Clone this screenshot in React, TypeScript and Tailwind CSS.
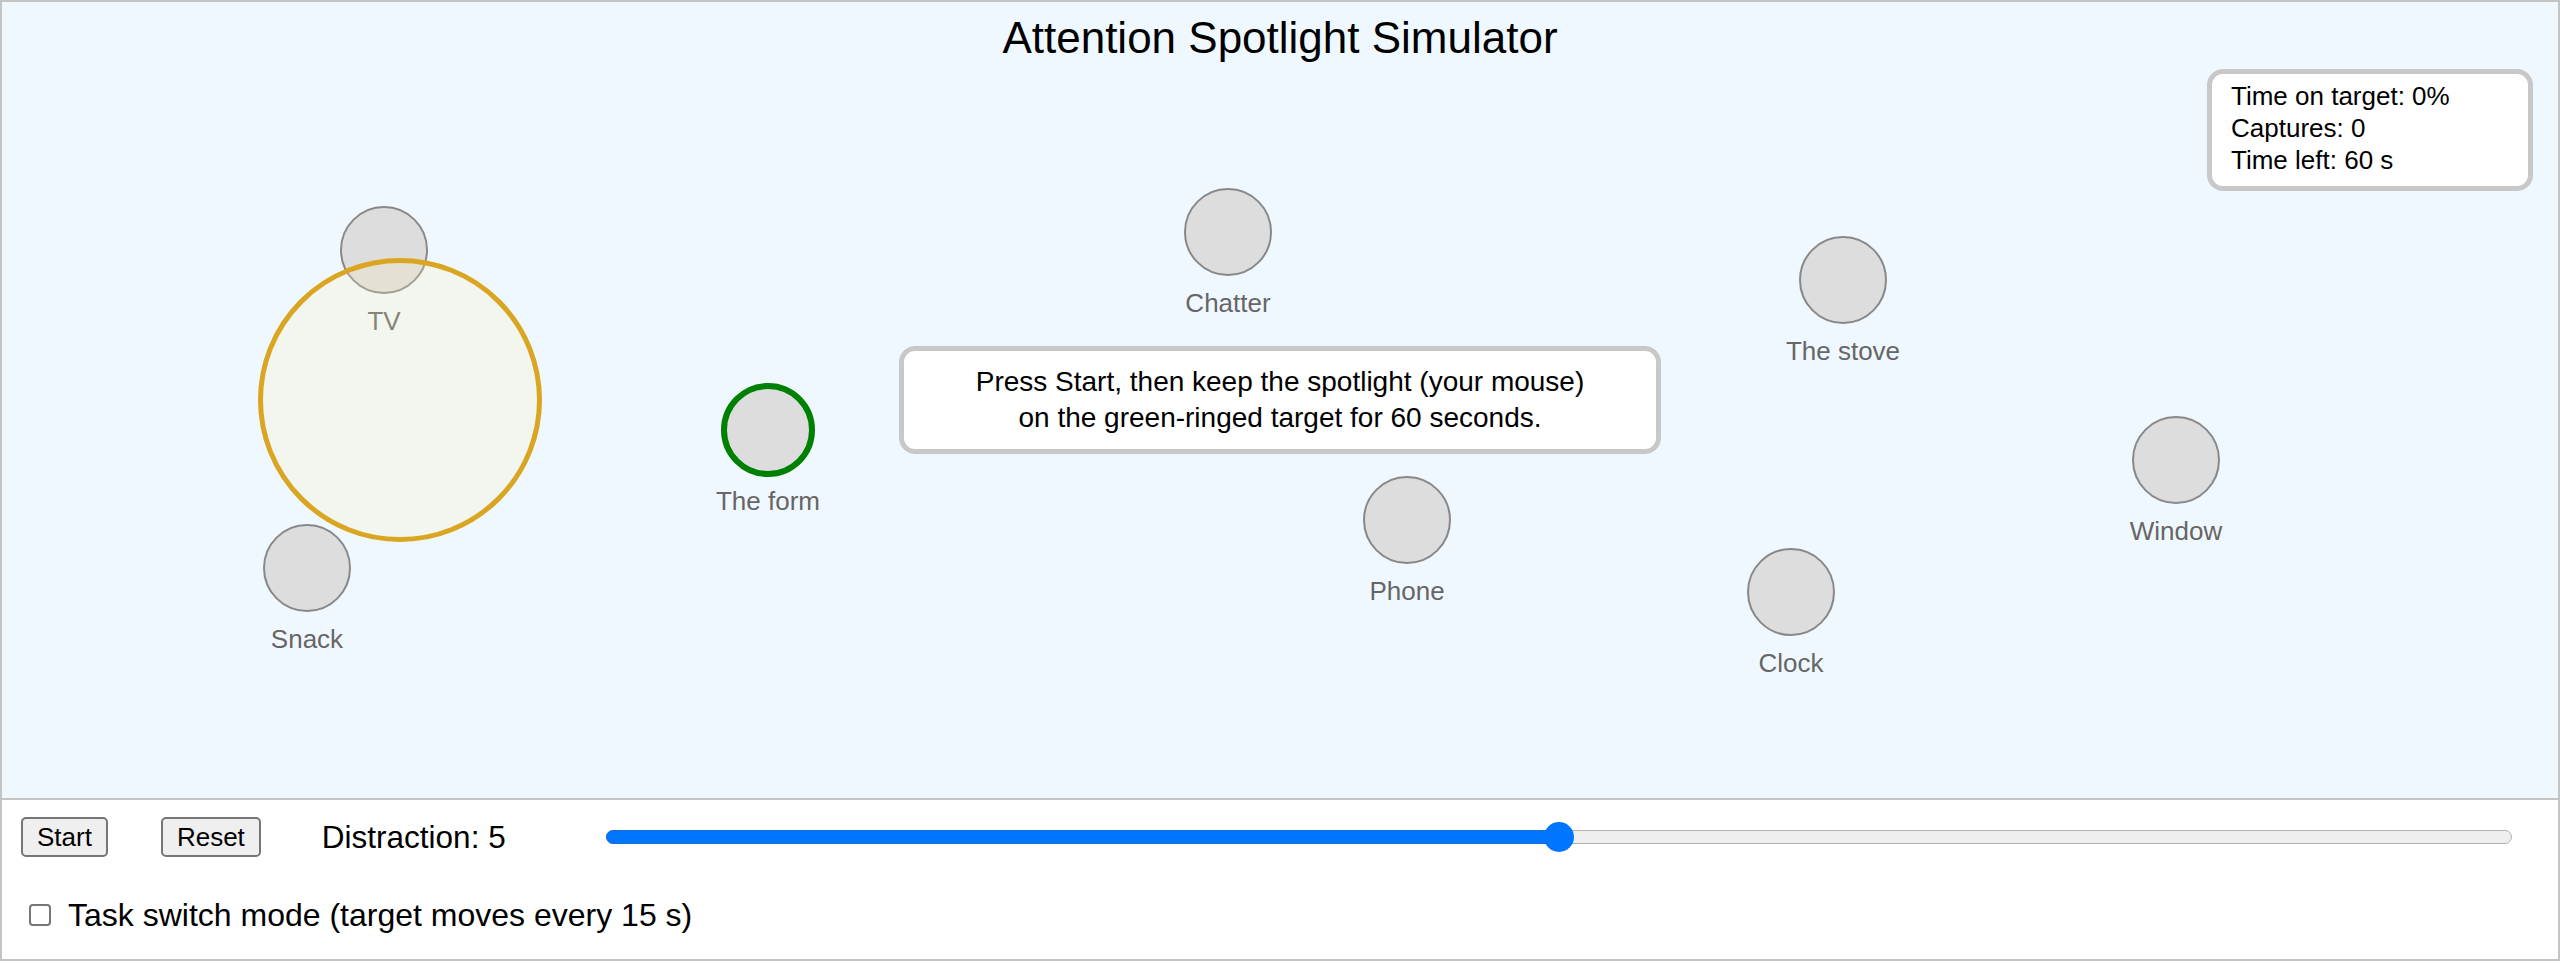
import React from "react";

interface Distractor {
  name: string;
  pos: string;
  target?: boolean;
}

const items: Distractor[] = [
  { name: "TV", pos: "left-[282px] top-[204px]" },
  { name: "Chatter", pos: "left-[1126px] top-[186px]" },
  { name: "The stove", pos: "left-[1741px] top-[234px]" },
  { name: "The form", pos: "left-[666px] top-[381px]", target: true },
  { name: "Window", pos: "left-[2074px] top-[414px]" },
  { name: "Phone", pos: "left-[1305px] top-[474px]" },
  { name: "Clock", pos: "left-[1689px] top-[546px]" },
  { name: "Snack", pos: "left-[205px] top-[522px]" },
];

const Item = ({ name, pos, target }: Distractor) => (
  <div className={`absolute w-[200px] flex flex-col items-center ${pos}`}>
    {target ? (
      <div className="w-[94px] h-[94px] rounded-full bg-[#ddd] border-[6px] border-[#008000]" />
    ) : (
      <div className="w-[88px] h-[88px] rounded-full bg-[#ddd] border-2 border-[#888]" />
    )}
    <span className={`${target ? "mt-[9px]" : "mt-[12px]"} text-[26px] leading-[30px] text-[#666] whitespace-nowrap`}>
      {name}
    </span>
  </div>
);

export default function App() {
  return (
    <div className="w-[2560px] h-[964px] bg-white text-black font-['Liberation_Sans',Arial,sans-serif]">
      <div className="border-2 border-[#c4c4c4]">
        {/* arena */}
        <div className="relative h-[798px] bg-[#f0f8ff] border-b-2 border-[#c4c4c4] overflow-hidden">
          <h1 className="pt-[10px] text-center text-[44px] leading-[51px] font-normal">
            Attention Spotlight Simulator
          </h1>

          {items.map((it) => (
            <Item key={it.name} {...it} />
          ))}

          <div className="absolute left-1/2 -translate-x-1/2 top-[344px] w-[762px] bg-white border-[5px] border-[#c8c8c8] rounded-[16px] py-[13px] text-center text-[28px] leading-[36px]">
            <p>Press Start, then keep the spotlight (your mouse)</p>
            <p>on the green-ringed target for 60 seconds.</p>
          </div>

          <div className="absolute right-[25px] top-[67px] w-[326px] bg-white border-[5px] border-[#c8c8c8] rounded-[16px] px-[19px] pt-[6px] pb-[10px] text-[26px] leading-[32px]">
            <div>Time on target: 0%</div>
            <div>Captures: 0</div>
            <div>Time left: 60 s</div>
          </div>

          {/* spotlight */}
          <div className="absolute left-[256px] top-[256px] w-[284px] h-[284px] rounded-full border-[5px] border-[#daa520] bg-[rgba(255,240,180,0.22)]" />
        </div>

        {/* controls */}
        <div className="h-[159px] pt-[17px]">
          <div className="h-[40px] flex items-center">
            <button className="ml-[19px] h-[40px] px-[14px] border-2 border-[#767676] rounded-[5px] bg-[#efefef] text-[26px] leading-[30px]">
              Start
            </button>
            <button className="ml-[53px] h-[40px] px-[14px] border-2 border-[#767676] rounded-[5px] bg-[#efefef] text-[26px] leading-[30px]">
              Reset
            </button>
            <span className="ml-[61px] text-[31.5px] leading-[36px]">Distraction: 5</span>
            <div className="relative flex-1 ml-[100px] mr-[46px] h-[14px] rounded-full bg-[#efefef] border border-[#b2b2b2]">
              <div className="absolute -left-px -top-px -bottom-px w-1/2 rounded-full bg-[#0075ff] border border-[#1f6ccf]" />
              <div className="absolute left-1/2 top-1/2 -translate-x-1/2 -translate-y-1/2 w-[30px] h-[30px] rounded-full bg-[#0075ff]" />
            </div>
          </div>
          <div className="mt-[40px] flex items-center">
            <span className="ml-[27px] w-[22px] h-[22px] border-2 border-[#767676] rounded-[4px] bg-white" />
            <span className="ml-[17px] text-[32px] leading-[36px]">Task switch mode (target moves every 15 s)</span>
          </div>
        </div>
      </div>
    </div>
  );
}
